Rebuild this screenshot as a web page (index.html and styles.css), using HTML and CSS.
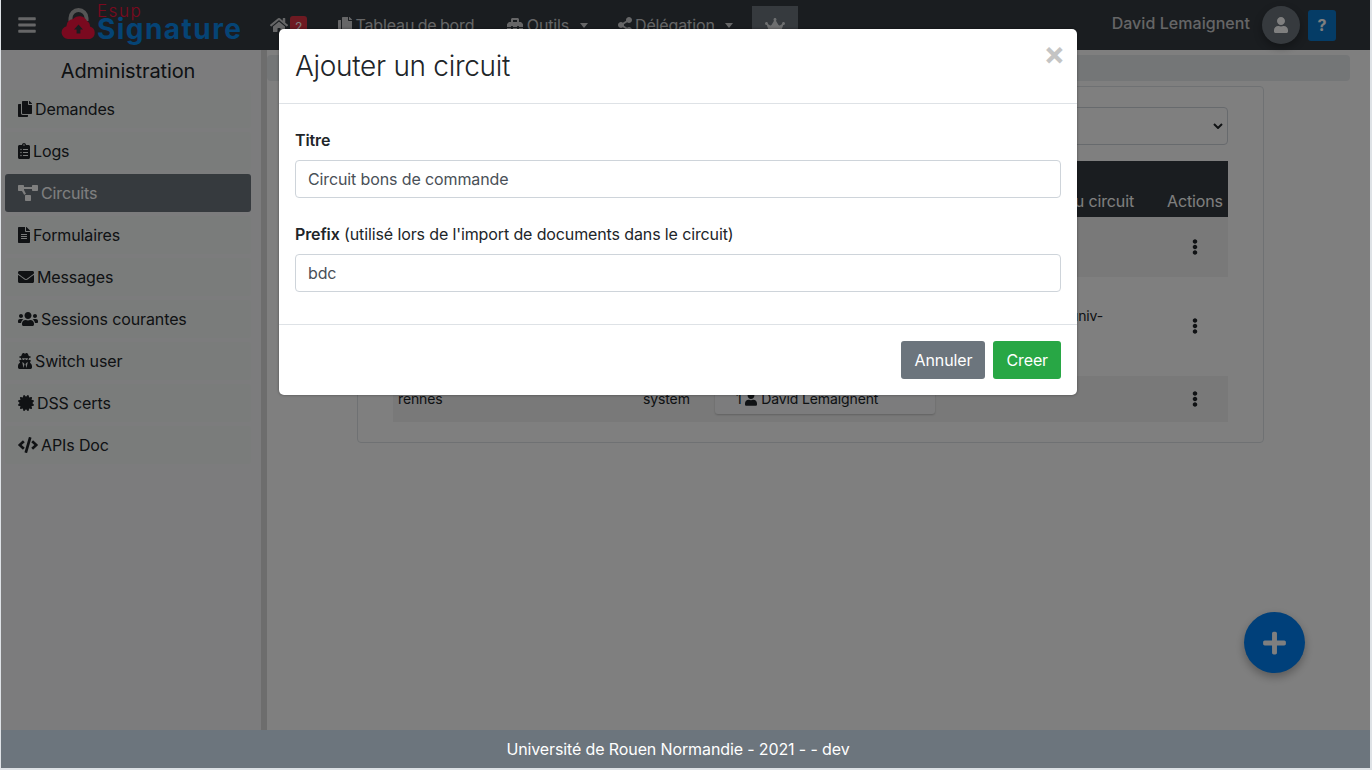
FILE: index.html
```html
<!DOCTYPE html>
<html lang="en">
<head>
    <meta charset="UTF-8" />
    <meta name="viewport" content="width=device-width, initial-scale=1" />
    <title>Esup Signature</title>
    <link rel="stylesheet" href="styles.css">
</head>
<body>
    <svg class="defs" aria-hidden="true">
        <symbol id="i-copy" viewBox="0 0 448 512"><path d="M320 448v40c0 13.3-10.7 24-24 24H24c-13.3 0-24-10.7-24-24V120c0-13.3 10.7-24 24-24h72v296c0 30.9 25.1 56 56 56h168zm0-344V0H152c-13.3 0-24 10.7-24 24v368c0 13.3 10.7 24 24 24h272c13.3 0 24-10.7 24-24V128H344c-13.2 0-24-10.8-24-24zm121-31L375 7c-4.5-4.5-10.6-7-17-7h-6v96h96v-6.1c0-6.4-2.5-12.5-7-16.9z"/></symbol>
        <symbol id="i-user" viewBox="0 0 448 512"><path d="M224 256c70.7 0 128-57.3 128-128S294.7 0 224 0 96 57.3 96 128s57.3 128 128 128zm89.6 32h-16.7c-22.2 10.2-46.9 16-72.9 16s-50.6-5.8-72.9-16h-16.7C60.2 288 0 348.2 0 422.4V464c0 26.5 21.5 48 48 48h352c26.5 0 48-21.5 48-48v-41.6c0-74.2-60.2-134.4-134.4-134.4z"/></symbol>
        <symbol id="i-kebab" viewBox="0 0 192 512"><path d="M96 184c39.8 0 72 32.2 72 72s-32.2 72-72 72-72-32.2-72-72 32.2-72 72-72zM24 80c0 39.8 32.2 72 72 72s72-32.2 72-72S135.8 8 96 8 24 40.2 24 80zm0 352c0 39.8 32.2 72 72 72s72-32.2 72-72-32.2-72-72-72-72 32.2-72 72z"/></symbol>
    </svg>

    <div class="page">
        <header class="navbar">
            <button class="nav-toggle" aria-label="Menu">
                <svg class="icon" width="18" height="20" viewBox="0 0 448 512"><path d="M16 132h416c8.8 0 16-7.2 16-16V76c0-8.8-7.2-16-16-16H16C7.2 60 0 67.2 0 76v40c0 8.8 7.2 16 16 16zm0 160h416c8.8 0 16-7.2 16-16v-40c0-8.8-7.2-16-16-16H16c-8.8 0-16 7.2-16 16v40c0 8.8 7.2 16 16 16zm0 160h416c8.8 0 16-7.2 16-16v-40c0-8.8-7.2-16-16-16H16c-8.8 0-16 7.2-16 16v40c0 8.8 7.2 16 16 16z"/></svg>
            </button>
            <a class="brand">
                <svg class="brand-cloud" width="36" height="34" viewBox="0 0 36 34">
                    <path class="cloud-lock" d="M7.5 14V11a10 10 0 0 1 20 0v3h-4v-3a6 6 0 0 0-12 0v3z"/>
                    <path class="cloud-body" d="M7 32a6.5 6.5 0 0 1-1.5-12.8A7 7 0 0 1 12 12a8.5 8.5 0 0 1 14 2 6.5 6.5 0 0 1 3 5.5A6.5 6.5 0 0 1 29 32z"/>
                    <path class="cloud-arrow" d="M17.5 17.5l4.5 5h-2.6v4h-3.8v-4H13z"/>
                </svg>
                <span class="brand-text">
                    <span class="brand-esup">Esup</span>
                    <span class="brand-sign">Signature</span>
                </span>
            </a>
            <nav class="nav-links">
                <a class="nav-link nav-home">
                    <svg class="icon" width="18" height="16" viewBox="0 0 576 512"><path d="M280.4 148.3L96 300.1V464a16 16 0 0 0 16 16l112.1-.3a16 16 0 0 0 15.9-16V368a16 16 0 0 1 16-16h64a16 16 0 0 1 16 16v95.6a16 16 0 0 0 16 16.1L464 480a16 16 0 0 0 16-16V300L295.7 148.3a12.2 12.2 0 0 0-15.3 0zM571.6 251.5L488 182.6V44.1a12 12 0 0 0-12-12h-56a12 12 0 0 0-12 12v72.6L318.5 43a48 48 0 0 0-61 0L4.3 251.5a12 12 0 0 0-1.6 16.9l25.5 31A12 12 0 0 0 45.2 301l235.2-193.7a12.2 12.2 0 0 1 15.3 0L530.9 301a12 12 0 0 0 16.9-1.6l25.5-31a12 12 0 0 0-1.7-16.9z"/></svg>
                    <span class="nav-badge">2</span>
                </a>
                <a class="nav-link nav-board"><svg class="icon" width="14" height="16"><use href="#i-copy"/></svg> Tableau de bord</a>
                <a class="nav-link nav-drop">
                    <svg class="icon" width="16" height="16" viewBox="0 0 512 512"><path d="M502.6 214.6l-45.3-45.3c-6-6-14.1-9.4-22.6-9.4H384V80c0-26.5-21.5-48-48-48H176c-26.5 0-48 21.5-48 48v80H77.3c-8.5 0-16.6 3.4-22.6 9.4L9.4 214.6c-6 6-9.4 14.1-9.4 22.6V320h128v-16c0-8.8 7.2-16 16-16h32c8.8 0 16 7.2 16 16v16h128v-16c0-8.8 7.2-16 16-16h32c8.8 0 16 7.2 16 16v16h128v-82.7c0-8.5-3.4-16.7-9.4-22.7zM320 160H192V96h128v64zm64 208c0 8.8-7.2 16-16 16h-32c-8.8 0-16-7.2-16-16v-16H192v16c0 8.8-7.2 16-16 16h-32c-8.8 0-16-7.2-16-16v-16H0v96c0 17.7 14.3 32 32 32h448c17.7 0 32-14.3 32-32v-96H384v16z"/></svg>
                    Outils
                </a>
                <a class="nav-link nav-drop">
                    <svg class="icon" width="14" height="16" viewBox="0 0 448 512"><path d="M352 320c-22.6 0-43.4 7.8-59.8 20.9l-102.5-64.1a96.6 96.6 0 0 0 0-41.7l102.5-64.1C308.6 184.2 329.4 192 352 192c53 0 96-43 96-96S405 0 352 0s-96 43-96 96c0 7.2.8 14.1 2.3 20.9l-102.5 64.1C139.4 167.8 118.6 160 96 160c-53 0-96 43-96 96s43 96 96 96c22.6 0 43.4-7.8 59.8-20.9l102.5 64.1A96.3 96.3 0 0 0 256 416c0 53 43 96 96 96s96-43 96-96-43-96-96-96z"/></svg>
                    Délégation
                </a>
                <a class="nav-admin">
                    <svg class="icon" width="20" height="16" viewBox="0 0 640 512"><path d="M528 448H112c-8.8 0-16 7.2-16 16v32c0 8.8 7.2 16 16 16h416c8.8 0 16-7.2 16-16v-32c0-8.8-7.2-16-16-16zm64-320c-26.5 0-48 21.5-48 48 0 7.1 1.6 13.7 4.4 19.8L476 239.2c-15.4 9.2-35.3 4-44.2-11.6L350.3 85C361 76.2 368 63 368 48c0-26.5-21.5-48-48-48s-48 21.5-48 48c0 15 7 28.2 17.7 37l-81.5 142.6c-8.9 15.6-28.9 20.8-44.2 11.6l-72.3-43.4c2.7-6 4.4-12.7 4.4-19.8 0-26.5-21.5-48-48-48S0 149.5 0 176s21.5 48 48 48c2.6 0 5.2-.4 7.7-.8L128 416h384l72.3-192.8c2.5.4 5.1.8 7.7.8 26.5 0 48-21.5 48-48s-21.5-48-48-48z"/></svg>
                </a>
            </nav>
            <div class="nav-user">
                <span class="user-name">David Lemaignent</span>
                <span class="user-avatar"><svg class="icon" width="14" height="16"><use href="#i-user"/></svg></span>
                <a class="help-btn">?</a>
            </div>
        </header>

        <div class="main">
            <aside class="sidebar">
                <h5 class="sidebar-title">Administration</h5>
                <ul class="side-list">
                    <li class="side-item"><svg class="icon" width="14" height="16"><use href="#i-copy"/></svg> Demandes</li>
                    <li class="side-item">
                        <svg class="icon" width="12" height="16" viewBox="0 0 384 512"><path d="M336 64h-80c0-35.3-28.7-64-64-64s-64 28.7-64 64H48C21.5 64 0 85.5 0 112v352c0 26.5 21.5 48 48 48h288c26.5 0 48-21.5 48-48V112c0-26.5-21.5-48-48-48zM96 424c-13.3 0-24-10.7-24-24s10.7-24 24-24 24 10.7 24 24-10.7 24-24 24zm0-96c-13.3 0-24-10.7-24-24s10.7-24 24-24 24 10.7 24 24-10.7 24-24 24zm0-96c-13.3 0-24-10.7-24-24s10.7-24 24-24 24 10.7 24 24-10.7 24-24 24zm96-192c13.3 0 24 10.7 24 24s-10.7 24-24 24-24-10.7-24-24 10.7-24 24-24zm128 368c0 4.4-3.6 8-8 8H168c-4.4 0-8-3.6-8-8v-16c0-4.4 3.6-8 8-8h144c4.4 0 8 3.6 8 8v16zm0-96c0 4.4-3.6 8-8 8H168c-4.4 0-8-3.6-8-8v-16c0-4.4 3.6-8 8-8h144c4.4 0 8 3.6 8 8v16zm0-96c0 4.4-3.6 8-8 8H168c-4.4 0-8-3.6-8-8v-16c0-4.4 3.6-8 8-8h144c4.4 0 8 3.6 8 8v16z"/></svg>
                        Logs
                    </li>
                    <li class="side-item active">
                        <svg class="icon" width="20" height="16" viewBox="0 0 640 512"><path d="M384 320H256c-17.7 0-32 14.3-32 32v128c0 17.7 14.3 32 32 32h128c17.7 0 32-14.3 32-32V352c0-17.7-14.3-32-32-32zM192 32c0-17.7-14.3-32-32-32H32C14.3 0 0 14.3 0 32v128c0 17.7 14.3 32 32 32h95.7l73.2 128c11-19.1 31.5-32 55.1-32h.3L192 160.3V128h256V64H192V32zM608 0H480c-17.7 0-32 14.3-32 32v128c0 17.7 14.3 32 32 32h128c17.7 0 32-14.3 32-32V32c0-17.7-14.3-32-32-32z"/></svg>
                        Circuits
                    </li>
                    <li class="side-item">
                        <svg class="icon" width="12" height="16" viewBox="0 0 384 512"><path d="M224 136V0H24C10.7 0 0 10.7 0 24v464c0 13.3 10.7 24 24 24h336c13.3 0 24-10.7 24-24V160H248c-13.2 0-24-10.8-24-24zm64 236c0 6.6-5.4 12-12 12H108c-6.6 0-12-5.4-12-12v-8c0-6.6 5.4-12 12-12h168c6.6 0 12 5.4 12 12v8zm0-64c0 6.6-5.4 12-12 12H108c-6.6 0-12-5.4-12-12v-8c0-6.6 5.4-12 12-12h168c6.6 0 12 5.4 12 12v8zm0-72v8c0 6.6-5.4 12-12 12H108c-6.6 0-12-5.4-12-12v-8c0-6.6 5.4-12 12-12h168c6.6 0 12 5.4 12 12zm96-114.1v6.1H256V0h6.1c6.4 0 12.5 2.5 17 7l97.9 98c4.5 4.5 7 10.6 7 16.9z"/></svg>
                        Formulaires
                    </li>
                    <li class="side-item">
                        <svg class="icon" width="16" height="16" viewBox="0 0 512 512"><path d="M502.3 190.8c3.9-3.1 9.7-.2 9.7 4.7V400c0 26.5-21.5 48-48 48H48c-26.5 0-48-21.5-48-48V195.6c0-5 5.7-7.8 9.7-4.7 22.4 17.4 52.1 39.5 154.1 113.6 21.1 15.4 56.7 47.8 92.2 47.6 35.7.3 72-32.8 92.3-47.6 102-74.1 131.6-96.3 154-113.7zM256 320c23.2.4 56.6-29.2 73.4-41.4 132.7-96.3 142.8-104.7 173.4-128.7 5.8-4.5 9.2-11.5 9.2-18.9v-19c0-26.5-21.5-48-48-48H48C21.5 64 0 85.5 0 112v19c0 7.4 3.4 14.3 9.2 18.9 30.6 23.9 40.7 32.4 173.4 128.7 16.8 12.2 50.2 41.8 73.4 41.4z"/></svg>
                        Messages
                    </li>
                    <li class="side-item">
                        <svg class="icon" width="20" height="16" viewBox="0 0 640 512"><path d="M96 224c35.3 0 64-28.7 64-64s-28.7-64-64-64-64 28.7-64 64 28.7 64 64 64zm448 0c35.3 0 64-28.7 64-64s-28.7-64-64-64-64 28.7-64 64 28.7 64 64 64zm32 32h-64c-17.6 0-33.5 7.1-45.1 18.6 40.3 22.1 68.9 62 75.1 109.4h66c17.7 0 32-14.3 32-32v-32c0-35.3-28.7-64-64-64zm-256 0c61.9 0 112-50.1 112-112S381.9 32 320 32 208 82.1 208 144s50.1 112 112 112zm76.8 32h-8.3c-20.8 10-43.9 16-68.5 16s-47.6-6-68.5-16h-8.3C179.6 288 128 339.6 128 403.2V432c0 26.5 21.5 48 48 48h288c26.5 0 48-21.5 48-48v-28.8c0-63.6-51.6-115.2-115.2-115.2zm-223.7-13.4C161.5 263.1 145.6 256 128 256H64c-35.3 0-64 28.7-64 64v32c0 17.7 14.3 32 32 32h65.9c6.3-47.4 34.9-87.3 75.2-109.4z"/></svg>
                        Sessions courantes
                    </li>
                    <li class="side-item">
                        <svg class="icon" width="14" height="16" viewBox="0 0 448 512"><path d="M383.9 308.3l23.9-62.6c4-10.5-3.7-21.7-15-21.7h-58.5c11-18.9 17.8-40.6 17.8-64v-.3c39.2-7.8 64-19.1 64-31.7 0-13.3-27.3-25.1-70.1-33-9.2-32.8-27-65.8-40.6-82.8-9.5-11.9-25.9-15.6-39.5-8.8l-27.6 13.8c-9 4.5-19.6 4.5-28.6 0L182.1 3.4c-13.6-6.8-30-3.1-39.5 8.8-13.5 17-31.4 50-40.6 82.8-42.7 7.9-70 19.7-70 33 0 12.6 24.8 23.9 64 31.7v.3c0 23.4 6.8 45.1 17.8 64H56.3c-11.5 0-19.2 11.7-14.7 22.3l25.8 60.2C27.3 329.8 0 372.7 0 422.4v44.8C0 491.9 20.1 512 44.8 512h358.4c24.7 0 44.8-20.1 44.8-44.8v-44.8c0-48.4-25.8-90.4-64.1-114.1zM176 480l-41.6-192 49.6 32 24 40-32 120zm96 0l-32-120 24-40 49.6-32L272 480zm41.7-298.5c-3.9 11.9-7 24.6-16.5 33.4-10.1 9.3-48 22.4-64-25-2.8-8.4-15.4-8.4-18.3 0-17 50.2-56 32.4-64 25-9.5-8.8-12.7-21.5-16.5-33.4-.8-2.5-6.3-5.7-6.3-5.8v-10.8c28.3 3.6 61 5.8 96 5.8s67.7-2.1 96-5.8v10.8c-.1.1-5.6 3.2-6.4 5.8z"/></svg>
                        Switch user
                    </li>
                    <li class="side-item">
                        <svg class="icon" width="16" height="16" viewBox="0 0 512 512"><path d="M458.6 255.9l46-45c13.7-13 7.3-36-10.7-40.3l-62.6-16 17.7-62c5-17.8-11.8-34.7-29.7-29.7l-62 17.7-16-62.6C336.9.3 313.7-6 301 7.3L256 53.7 211 7.3C198.4-6 175 .1 170.7 18l-16 62.6-62-17.7c-17.8-5-34.7 11.8-29.7 29.7l17.7 62-62.6 16C.1 175-6 198.2 7.4 210.9l46 45-46 45C-6.3 313.9.1 336.9 18.1 341.2l62.6 16-17.7 62c-5 17.8 11.8 34.7 29.7 29.7l62-17.7 16 62.6c4.3 17.9 27.6 24.1 40.3 10.8l45-46.1 45 46.1c13 13.5 36 7.3 40.3-10.7l16-62.6 62 17.7c17.8 5 34.7-11.8 29.7-29.7l-17.7-62 62.6-16c18-4.3 24.4-27.3 10.7-40.3z"/></svg>
                        DSS certs
                    </li>
                    <li class="side-item">
                        <svg class="icon" width="20" height="16" viewBox="0 0 640 512"><path d="M278.9 511.5l-61-17.7c-6.4-1.8-10-8.5-8.2-14.9L346.2 8.7c1.8-6.4 8.5-10 14.9-8.2l61 17.7c6.4 1.8 10 8.5 8.2 14.9L293.8 503.3c-1.9 6.4-8.5 10.1-14.9 8.2zm-114-112.2l43.5-46.4c4.6-4.9 4.3-12.7-.8-17.2L117 256l90.6-79.7c5.1-4.5 5.5-12.3.8-17.2l-43.5-46.4c-4.5-4.8-12.1-5.1-17-.5L3.8 247.2c-5.1 4.7-5.1 12.8 0 17.5l144.1 135.1c4.9 4.6 12.5 4.4 17-.5zm327.2.6l144.1-135.1c5.1-4.7 5.1-12.8 0-17.5L492.1 112.1c-4.8-4.5-12.4-4.3-17 .5L431.6 159c-4.6 4.9-4.3 12.7.8 17.2L523 256l-90.6 79.7c-5.1 4.5-5.5 12.3-.8 17.2l43.5 46.4c4.5 4.9 12.1 5.1 17 .6z"/></svg>
                        APIs Doc
                    </li>
                </ul>
            </aside>

            <section class="content">
                <div class="breadcrumb-bar"></div>
                <div class="card">
                    <div class="select-row"><span class="fake-select"><svg class="select-arrow" width="10" height="6" viewBox="0 0 10 6"><path d="M1 1l4 4 4-4"/></svg></span></div>
                    <table class="circuit-table">
                        <thead>
                            <tr>
                                <th class="col-name"></th>
                                <th class="col-type"></th>
                                <th class="col-users"></th>
                                <th class="col-owner">du circuit</th>
                                <th class="col-actions">Actions</th>
                            </tr>
                        </thead>
                        <tbody>
                            <tr class="row-a">
                                <td></td><td></td><td></td><td></td>
                                <td class="cell-actions"><svg class="icon" width="6" height="16"><use href="#i-kebab"/></svg></td>
                            </tr>
                            <tr class="row-b">
                                <td></td><td></td><td></td>
                                <td class="cell-owner">univ-</td>
                                <td class="cell-actions cell-actions-b"><svg class="icon" width="6" height="16"><use href="#i-kebab"/></svg></td>
                            </tr>
                            <tr class="row-c">
                                <td class="cell-text">rennes</td>
                                <td class="cell-text">system</td>
                                <td><span class="user-chip">1 <svg class="icon" width="12" height="14"><use href="#i-user"/></svg> David Lemaignent</span></td>
                                <td></td>
                                <td class="cell-actions"><svg class="icon" width="6" height="16"><use href="#i-kebab"/></svg></td>
                            </tr>
                        </tbody>
                    </table>
                </div>
            </section>
        </div>

        <a class="fab" aria-label="Ajouter">
            <svg class="icon" width="23" height="26" viewBox="0 0 448 512"><path d="M416 208H272V64c0-17.7-14.3-32-32-32h-32c-17.7 0-32 14.3-32 32v144H32c-17.7 0-32 14.3-32 32v32c0 17.7 14.3 32 32 32h144v144c0 17.7 14.3 32 32 32h32c17.7 0 32-14.3 32-32V304h144c17.7 0 32-14.3 32-32v-32c0-17.7-14.3-32-32-32z"/></svg>
        </a>

        <div class="backdrop"></div>

        <div class="modal">
            <div class="modal-header">
                <h3 class="modal-title">Ajouter un circuit</h3>
                <span class="modal-close">×</span>
            </div>
            <form class="modal-body">
                <label class="form-label" for="titre"><b>Titre</b></label>
                <input class="form-input" id="titre" type="text" value="Circuit bons de commande" />
                <label class="form-label form-label-2" for="prefix"><b>Prefix</b> (utilisé lors de l'import de documents dans le circuit)</label>
                <input class="form-input" id="prefix" type="text" value="bdc" />
            </form>
            <div class="modal-footer">
                <button class="btn btn-cancel">Annuler</button>
                <button class="btn btn-create">Creer</button>
            </div>
        </div>

        <footer class="footer">Université de Rouen Normandie - 2021 - - dev</footer>
    </div>
</body>
</html>
```

FILE: styles.css
```css
* {
    box-sizing: border-box;
}
html, body {
    height: 100%;
}
body {
    margin: 0;
    background: #dee2e6;
    color: #212529;
    font-family: Inter, "Liberation Sans", sans-serif;
    font-size: 16px;
    letter-spacing: -.12px;
    overflow: hidden;
}
.defs {
    position: absolute;
    width: 0;
    height: 0;
}
.icon {
    fill: currentColor;
    vertical-align: -2px;
}
.page {
    position: relative;
    display: flex;
    flex-direction: column;
    height: 768px;
    width: 1369px;
    margin-left: 1px;
    background: #fff;
    overflow: hidden;
}

/* navbar */
.navbar {
    display: flex;
    align-items: flex-start;
    height: 50px;
    flex-shrink: 0;
    background: #343a40;
    color: rgba(255,255,255,.75);
}
.nav-toggle {
    margin: 15px 0 0 17px;
    padding: 0;
    width: 18px;
    height: 20px;
    border: none;
    background: none;
    color: inherit;
    line-height: 0;
}
.brand {
    display: flex;
    align-items: flex-start;
    margin: 7px 0 0 25px;
    width: 202px;
}
.cloud-lock {
    fill: #aaa;
}
.cloud-body {
    fill: #f4123f;
}
.cloud-arrow {
    fill: #343a40;
}
.brand-text {
    display: block;
    position: relative;
    width: 145px;
    height: 36px;
}
.brand-esup {
    position: absolute;
    left: 0;
    top: -3px;
    font-size: 17px;
    font-weight: 300;
    letter-spacing: 1.5px;
    line-height: 14px;
    color: #f4123f;
}
.brand-sign {
    position: absolute;
    left: 0;
    top: 11px;
    font-size: 28px;
    font-weight: 700;
    letter-spacing: 1.45px;
    line-height: 22px;
    color: #0a88ea;
}
.nav-links {
    display: flex;
    align-items: flex-start;
    margin-left: 7px;
}
.nav-link {
    display: block;
    margin-top: 15px;
    margin-right: 30px;
    white-space: nowrap;
    word-spacing: -1px;
}
.nav-home {
    width: 38px;
    position: relative;
}
.nav-board {
    margin-right: 33px;
}
.nav-badge {
    position: absolute;
    left: 20px;
    top: 1px;
    width: 17px;
    height: 22px;
    border-radius: 3px;
    background: #dc3545;
    color: #fff;
    font-size: 12px;
    line-height: 22px;
    text-align: center;
}
.nav-drop::after {
    content: "";
    display: inline-block;
    margin-left: 7px;
    vertical-align: 3px;
    border-top: 5px solid;
    border-left: 4.5px solid transparent;
    border-right: 4.5px solid transparent;
}
.nav-admin {
    display: block;
    width: 46px;
    height: 44px;
    margin: 6px 0 0 -11px;
    padding-top: 10px;
    background: #6c757d;
    text-align: center;
}
.nav-user {
    display: flex;
    align-items: flex-start;
    margin-left: auto;
    margin-right: 34px;
}
.user-name {
    margin-top: 13px;
    font-weight: 500;
    letter-spacing: .05px;
}
.user-avatar {
    display: flex;
    align-items: center;
    justify-content: center;
    width: 38px;
    height: 38px;
    margin: 6px 0 0 12px;
    border-radius: 50%;
    background: #6c757d;
    box-shadow: 0 4px 8px rgba(0,0,0,.3);
    color: #fff;
}
.help-btn {
    display: block;
    width: 28px;
    height: 31px;
    margin: 10px 0 0 8px;
    border-radius: 3px;
    background: #0a78cc;
    color: #fff;
    font-weight: 700;
    line-height: 31px;
    text-align: center;
}

/* sidebar and page content, behind the dialog */
.main {
    display: flex;
    flex: 1;
    min-height: 0;
}
.sidebar {
    width: 266px;
    flex-shrink: 0;
    padding: 0 10px 0 4px;
    background: #f8f9fa;
    border-right: 6px solid #dadada;
}
.sidebar-title {
    margin: 9px 0 7px;
    font-size: 20px;
    font-weight: 400;
    line-height: 24px;
    text-align: center;
}
.side-list {
    margin: 0;
    padding: 0;
    list-style: none;
}
.side-item {
    display: flex;
    align-items: center;
    gap: 3px;
    height: 38px;
    margin-bottom: 4px;
    padding: 0 13px;
    border-radius: 3px;
    background: #f4f8f6;
    white-space: nowrap;
}
.side-item.active {
    background: #6c757d;
    color: #fff;
}
.content {
    flex: 1;
    min-width: 0;
    padding: 5px 20px 0 0;
}
.breadcrumb-bar {
    height: 26px;
    border-radius: 4px;
    background: #e9ecef;
}
.card {
    width: 907px;
    margin: 5px 0 0 90px;
    padding: 20px 35px 20px 35px;
    border: 1px solid #dee2e6;
    border-radius: 4px;
    background: #fff;
}
.select-row {
    height: 38px;
    margin-bottom: 16px;
}
.fake-select {
    display: block;
    position: relative;
    height: 38px;
    border: 1px solid #ced4da;
    border-radius: 4px;
}
.select-arrow {
    position: absolute;
    right: 4px;
    top: 15px;
    fill: none;
    stroke: #212529;
    stroke-width: 2;
}
.circuit-table {
    width: 100%;
    border-collapse: collapse;
    table-layout: fixed;
    font-size: 14px;
}
.circuit-table th {
    height: 56px;
    padding: 0 5px 6px;
    vertical-align: bottom;
    background: #343a40;
    color: #fff;
    font-size: 16px;
    font-weight: 400;
    text-align: left;
    white-space: nowrap;
}
.circuit-table td {
    padding: 0 5px;
}
.col-name {
    width: 245px;
}
.col-type {
    width: 72px;
}
.col-users {
    width: 355px;
}
.col-actions {
    width: 66px;
}
.circuit-table .col-owner {
    padding-left: 0;
}
.row-a {
    height: 60px;
    background: #f2f2f2;
}
.row-b {
    height: 99px;
}
.row-c {
    height: 46px;
    background: #f2f2f2;
}
.circuit-table .cell-owner {
    white-space: nowrap;
    padding-bottom: 22px;
}
.circuit-table .cell-text {
    padding-bottom: 2px;
}
.cell-actions {
    text-align: center;
    line-height: 0;
}
.circuit-table .cell-actions-b {
    padding-bottom: 2px;
}
.user-chip {
    display: block;
    width: 220px;
    height: 30px;
    padding: 3px 0 0 21px;
    border-radius: 3px;
    background: #f8f9fa;
    box-shadow: 0 1px 2px rgba(0,0,0,.2);
    line-height: 24px;
    white-space: nowrap;
}

/* floating add button */
.fab {
    position: absolute;
    left: 1243px;
    top: 612px;
    display: flex;
    align-items: center;
    justify-content: center;
    width: 61px;
    height: 61px;
    border-radius: 50%;
    background: #0080f4;
    box-shadow: 0 4px 10px rgba(0,0,0,.3);
    color: #fff;
}

/* dialog */
.backdrop {
    position: absolute;
    inset: 0;
    background: rgba(0,0,0,.5);
}
.modal {
    position: absolute;
    left: 278px;
    top: 29px;
    width: 798px;
    border-radius: 5px;
    background: #fff;
    box-shadow: 0 0 3px rgba(0,0,0,.4);
}
.modal-header {
    display: flex;
    justify-content: space-between;
    height: 75px;
    padding: 16px;
    border-bottom: 1px solid #dee2e6;
}
.modal-title {
    margin: 0;
    font-size: 28px;
    font-weight: 300;
    letter-spacing: -.3px;
    line-height: 42px;
    color: #212529;
}
.modal-close {
    margin: -9px -4px 0 0;
    font-size: 32px;
    font-weight: 700;
    line-height: 36px;
    color: #c4c4c4;
}
.modal-body {
    display: flex;
    flex-direction: column;
    height: 220px;
    padding: 24px 16px 0;
}
.form-label {
    display: block;
    margin-bottom: 8px;
    line-height: 24px;
}
.form-label b {
    font-weight: 600;
}
.form-label-2 {
    margin-top: 24px;
}
.form-input {
    height: 38px;
    padding: 6px 12px;
    border: 1px solid #ced4da;
    border-radius: 4px;
    color: #495057;
    font: inherit;
    letter-spacing: inherit;
}
.modal-footer {
    display: flex;
    justify-content: flex-end;
    gap: 8px;
    height: 71px;
    padding: 16px;
    border-top: 1px solid #dee2e6;
}
.btn {
    height: 38px;
    padding: 0 13px;
    border: none;
    border-radius: 3px;
    color: #fff;
    font: inherit;
    letter-spacing: inherit;
}
.btn-cancel {
    width: 84px;
    background: #6c757d;
}
.btn-create {
    background: #28a745;
}

.footer {
    position: relative;
    flex-shrink: 0;
    height: 38px;
    padding-right: 15px;
    background: #6c757d;
    color: #fff;
    line-height: 38px;
    text-align: center;
}
```
